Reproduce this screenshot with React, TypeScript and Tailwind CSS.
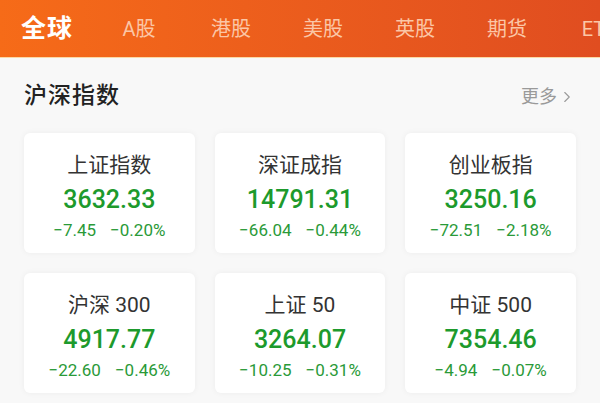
import { ChevronRight } from "lucide-react";

const TABS = ["全球", "A股", "港股", "美股", "英股", "期货", "ETF"];

const INDICES = [
    { name: "上证指数", value: "3632.33", change: "−7.45", pct: "−0.20%" },
    { name: "深证成指", value: "14791.31", change: "−66.04", pct: "−0.44%" },
    { name: "创业板指", value: "3250.16", change: "−72.51", pct: "−2.18%" },
    { name: "沪深 300", value: "4917.77", change: "−22.60", pct: "−0.46%" },
    { name: "上证 50", value: "3264.07", change: "−10.25", pct: "−0.31%" },
    { name: "中证 500", value: "7354.46", change: "−4.94", pct: "−0.07%" },
];

function IndexCard({ name, value, change, pct }: { name: string; value: string; change: string; pct: string }) {
    return (
        <div className="h-[120px] rounded-md bg-white shadow-[0_0_6px_rgba(0,0,0,0.05)] flex flex-col items-center pt-[18px]">
            <div className="text-[21px] leading-[28px] text-[#333]">{name}</div>
            <div className="mt-[6px] text-[25px] leading-[30px] font-medium text-[#1d9a2c]">{value}</div>
            <div className="mt-[4px] flex gap-[14px] text-[17px] leading-[22px] text-[#2a9a38]">
                <span>{change}</span>
                <span>{pct}</span>
            </div>
        </div>
    );
}

export default function App() {
    return (
        <div className="w-[600px] h-[403px] overflow-hidden bg-[#f8f8f8] font-['Roboto','Noto_Sans_CJK_SC',sans-serif]">
            {/* Market tabs */}
            <div className="h-[58px] bg-gradient-to-r from-[#f66b18] to-[#e04d20] border-b border-[#fbd9a6] flex items-center pl-[1px] whitespace-nowrap overflow-hidden">
                {TABS.map((t, i) => (
                    <span
                        key={t}
                        className={
                            "w-[92px] shrink-0 text-center " +
                            (i === 0
                                ? "text-[25px] font-bold text-white tracking-[1px]"
                                : "text-[20px] text-[#fbc6a6]")
                        }
                    >
                        {t}
                    </span>
                ))}
            </div>

            {/* Section header */}
            <div className="h-[75px] flex items-center justify-between px-6 pt-[2px]">
                <span className="text-[23px] font-medium text-[#222] tracking-[1px]">沪深指数</span>
                <span className="flex items-center text-[18px] text-[#9a9a9a]">
                    更多
                    <ChevronRight size={18} strokeWidth={1.5} className="ml-[1px]" />
                </span>
            </div>

            {/* Index cards */}
            <div className="grid grid-cols-3 gap-x-5 gap-y-5 px-6">
                {INDICES.map((idx) => (
                    <IndexCard key={idx.name} {...idx} />
                ))}
            </div>
        </div>
    );
}
